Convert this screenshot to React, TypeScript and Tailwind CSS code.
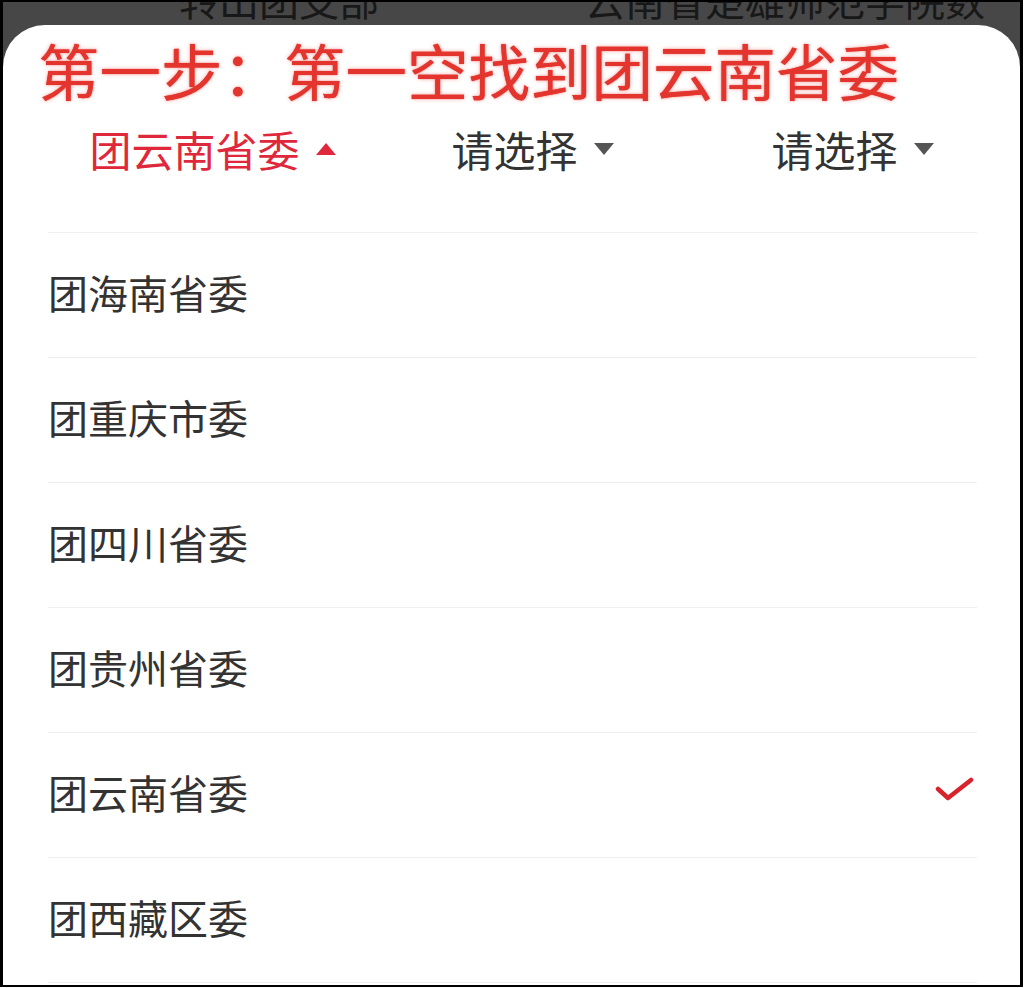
const provinces = ["团海南省委", "团重庆市委", "团四川省委", "团贵州省委", "团云南省委", "团西藏区委"];
const selected = "团云南省委";

function Caret({ up, active }: { up?: boolean; active?: boolean }) {
  return (
    <svg width="22" height="14" viewBox="0 0 22 14" className="shrink-0">
      {up ? (
        <path d="M11 1 L21 13 L1 13 Z" fill={active ? "#e0283c" : "#555555"} />
      ) : (
        <path d="M1 1 L21 1 L11 13 Z" fill={active ? "#e0283c" : "#555555"} />
      )}
    </svg>
  );
}

function Check() {
  return (
    <svg width="40" height="32" viewBox="0 0 40 32">
      <path
        d="M3 14 L13 23 L36 5"
        fill="none"
        stroke="#d8232c"
        strokeWidth="4.5"
        strokeLinecap="round"
        strokeLinejoin="round"
      />
    </svg>
  );
}

export default function App() {
  return (
    <div
      className="w-[1024px] h-[988px] bg-white overflow-hidden"
      style={{ fontFamily: '"Noto Sans CJK SC", "Noto Sans", sans-serif' }}
    >
      <div className="w-[1023px] h-[987px] bg-black pt-[2px] pl-[3px] pr-[3px] pb-[2px]">
        <div className="h-full bg-[#474747] flex flex-col">
          {/* background page peeking above the sheet */}
          <div className="h-[23px] overflow-hidden shrink-0">
            <div className="flex -mt-[23px] text-[40px] leading-[40px] text-[#181818] whitespace-nowrap">
              <span className="ml-[176px]">转出团支部</span>
              <span className="ml-[206px]">云南省楚雄师范学院数</span>
            </div>
          </div>

          <div className="flex-1 bg-white rounded-t-[42px] overflow-hidden">
            <div className="pt-[14px] pl-[35px] text-[61.5px] leading-[62px] font-normal text-[#e3342d] [text-shadow:0_0_1px_#e3342d,0_0_4px_rgba(227,52,45,0.4)] whitespace-nowrap">
              第一步：第一空找到团云南省委
            </div>

            <div className="flex pl-[50px] pt-[27px] pb-[62px] text-[42px] leading-[42px]">
              <div className="w-[320px] flex items-center justify-center gap-[15px] text-[#e0283c]">
                <span>团云南省委</span>
                <Caret up active />
              </div>
              <div className="w-[320px] flex items-center justify-center gap-[15px] text-[#333333]">
                <span>请选择</span>
                <Caret />
              </div>
              <div className="w-[320px] flex items-center justify-center gap-[15px] text-[#333333]">
                <span>请选择</span>
                <Caret />
              </div>
            </div>

            <div className="ml-[45px] mr-[43px] border-t border-[#eeeeee]">
              {provinces.map((p) => (
                <div
                  key={p}
                  className="h-[125px] flex items-center justify-between border-b border-[#eeeeee] text-[40px] leading-[40px] text-[#333333]"
                >
                  <span className="-mt-[6px]">{p}</span>
                  {p === selected && (
                    <span className="mr-[2px] -mt-[8px]">
                      <Check />
                    </span>
                  )}
                </div>
              ))}
            </div>
          </div>
        </div>
      </div>
    </div>
  );
}
